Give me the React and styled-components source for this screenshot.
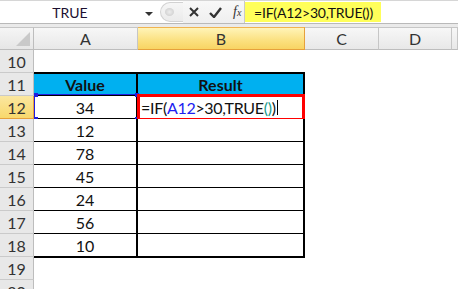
import styled, { createGlobalStyle } from 'styled-components';

const GlobalStyle = createGlobalStyle`
  html, body {
    margin: 0;
    padding: 0;
    background: #fff;
  }
  body {
    width: 458px;
    height: 289px;
    overflow: hidden;
    font-family: 'Lato', 'Open Sans', sans-serif;
  }
`;

const COLS = ['A', 'B', 'C', 'D'];
const ROWS = [10, 11, 12, 13, 14, 15, 16, 17, 18, 19, 20];
const values = { 13: '12', 14: '78', 15: '45', 16: '24', 17: '56', 18: '10' };

const App = () => {
  return (
    <Page>
      <GlobalStyle />
      <FormulaBar>
        <NameBox>
          <span>TRUE</span>
          <Caret />
        </NameBox>
        <Grip>
          <Knob />
        </Grip>
        <BarIcons>
          <svg width='10' height='10' viewBox='0 0 10 10'>
            <path d='M1 1 L9 9 M9 1 L1 9' stroke='#333' strokeWidth='2' />
          </svg>
          <svg width='13' height='11' viewBox='0 0 13 11'>
            <path d='M1 6 L5 10 L12 1' stroke='#333' strokeWidth='2.4' fill='none' />
          </svg>
          <Fx>
            f<sub>x</sub>
          </Fx>
        </BarIcons>
        <FormulaInput>
          <Highlight>=IF(A12&gt;30,TRUE())</Highlight>
        </FormulaInput>
      </FormulaBar>
      <Band />
      <Sheet>
        <Corner>
          <svg width='16' height='16' viewBox='0 0 16 16'>
            <path d='M15 1 L15 15 L1 15 Z' fill='#c9c9c9' />
          </svg>
        </Corner>
        {COLS.map(c => (
          <ColHead key={c} active={c === 'B'}>
            {c}
          </ColHead>
        ))}
        <ColHead />
        {ROWS.map(r => {
          const inTable = r >= 11 && r <= 18;
          return [
            <RowHead key={`h${r}`} active={r === 12}>
              {r}
            </RowHead>,
            inTable ? (
              <Cell key={`a${r}`} header={r === 11} top={r === 11} side>
                {r === 11 ? 'Value' : r === 12 ? '34' : values[r]}
                {r === 12 && (
                  <RangeBox>
                    <Handle pos='tl' />
                    <Handle pos='tr' />
                    <Handle pos='bl' />
                    <Handle pos='br' />
                  </RangeBox>
                )}
              </Cell>
            ) : (
              <Blank key={`a${r}`} />
            ),
            inTable ? (
              <Cell key={`b${r}`} header={r === 11} top={r === 11} side>
                {r === 11 && 'Result'}
                {r === 12 && (
                  <EditBox>
                    =IF(<Ref>A12</Ref>&gt;30,TRUE<Paren>()</Paren>)
                    <Cursor />
                  </EditBox>
                )}
              </Cell>
            ) : (
              <Blank key={`b${r}`} />
            ),
            <Blank key={`c${r}`} />,
            <Blank key={`d${r}`} />,
            <Blank key={`e${r}`} />,
          ];
        })}
      </Sheet>
    </Page>
  );
};

const Page = styled.div`
  width: 458px;
  height: 289px;
  overflow: hidden;
  background: #fff;
`;

const FormulaBar = styled.div`
  display: flex;
  align-items: stretch;
  height: 24px;
  box-sizing: border-box;
  border-top: 1px solid #d6d6d6;
  border-bottom: 1px solid #b9b9b9;
  background: #fff;
`;

const NameBox = styled.div`
  position: relative;
  display: flex;
  align-items: center;
  justify-content: center;
  width: 160px;
  padding-right: 20px;
  box-sizing: border-box;
  font-size: 14px;
  color: #1c1030;
`;

const Caret = styled.div`
  position: absolute;
  right: 7px;
  top: 11px;
  width: 0;
  height: 0;
  border-left: 4px solid transparent;
  border-right: 4px solid transparent;
  border-top: 4px solid #333;
`;

const Grip = styled.div`
  display: flex;
  align-items: center;
  width: 22px;
  margin: 1px 0;
  border-radius: 11px 0 0 11px;
  border: 1px solid #d2d2d2;
  border-right: none;
  background: linear-gradient(#f6f6f6, #ebebeb);
`;

const Knob = styled.div`
  width: 9px;
  height: 8px;
  margin-left: 4px;
  border-radius: 50%;
  background: radial-gradient(#ededed, #c8c8c8);
`;

const BarIcons = styled.div`
  display: flex;
  align-items: center;
  gap: 10px;
  padding-left: 6px;
  width: 62px;
  box-sizing: border-box;
  background: linear-gradient(#f8f8f8, #efefef);
  border-right: 1px solid #c9c9c9;
`;

const Fx = styled.span`
  font-family: 'Liberation Serif', serif;
  font-style: italic;
  font-size: 14px;
  color: #333;
  margin-left: 1px;
  sub {
    font-size: 10px;
    vertical-align: 0;
  }
`;

const FormulaInput = styled.div`
  display: flex;
  align-items: center;
  flex: 1;
  padding: 1px 0;
`;

const Highlight = styled.div`
  display: flex;
  align-items: center;
  height: 100%;
  padding: 0 8px 0 9px;
  background: #ffff5a;
  font-size: 14px;
  letter-spacing: -0.2px;
  color: #111;
`;

const Band = styled.div`
  height: 3px;
  background: #eaeaea;
`;

const Sheet = styled.div`
  display: grid;
  grid-template-columns: 34px 104px 167px 74px 73px 1fr;
  grid-auto-rows: 23px;
  font-size: 16px;
`;

const Corner = styled.div`
  display: flex;
  align-items: flex-end;
  justify-content: flex-end;
  padding: 0 2px 2px 0;
  box-sizing: border-box;
  background: linear-gradient(#f5f5f5, #e6e6e6);
  border-top: 1px solid #c6c6c6;
  border-right: 1px solid #bdbdbd;
  border-bottom: 1px solid #bdbdbd;
`;

const ColHead = styled.div`
  display: flex;
  align-items: center;
  justify-content: center;
  box-sizing: border-box;
  border-top: 1px solid ${({ active }) => (active ? '#f0b350' : '#c6c6c6')};
  border-right: 1px solid ${({ active }) => (active ? '#e6a13c' : '#c6c6c6')};
  border-bottom: 1px solid ${({ active }) => (active ? '#e6a13c' : '#bdbdbd')};
  background: ${({ active }) =>
    active ? 'linear-gradient(#fff4b8, #fbe07f 60%, #f8d463)' : 'linear-gradient(#f7f7f7, #e8e8e8)'};
  color: #333;
`;

const RowHead = styled.div`
  display: flex;
  align-items: center;
  justify-content: center;
  box-sizing: border-box;
  border-right: 1px solid ${({ active }) => (active ? '#e6a13c' : '#bdbdbd')};
  border-bottom: 1px solid ${({ active }) => (active ? '#e6a13c' : '#cacaca')};
  background: ${({ active }) => (active ? 'linear-gradient(#fbe7a0, #f8d86c)' : '#e8e8e8')};
  color: #333;
`;

const Blank = styled.div`
  background: #fff;
`;

const Cell = styled.div`
  position: relative;
  display: flex;
  align-items: center;
  justify-content: center;
  box-sizing: border-box;
  margin-top: ${({ top }) => (top ? '-1px' : '0')};
  border-top: ${({ top }) => (top ? '2px solid #000' : 'none')};
  border-right: ${({ side }) => (side ? '2px solid #000' : 'none')};
  border-bottom: 2px solid #000;
  margin-bottom: -1px;
  z-index: 1;
  background: ${({ header }) => (header ? '#00b0f0' : '#fff')};
  font-weight: ${({ header }) => (header ? 700 : 400)};
  color: #111;
`;

const RangeBox = styled.div`
  position: absolute;
  left: 0;
  top: -2px;
  right: -2px;
  bottom: -2px;
  border: 1px solid #1f1fe0;
`;

const Handle = styled.div`
  position: absolute;
  width: 4px;
  height: 4px;
  background: #1f1fe0;
  ${({ pos }) => (pos[0] === 't' ? 'top: -2px;' : 'bottom: -2px;')}
  ${({ pos }) => (pos[1] === 'l' ? 'left: -1px;' : 'right: -2px;')}
`;

const EditBox = styled.div`
  position: absolute;
  left: -1px;
  top: -2px;
  right: -2px;
  bottom: -3px;
  display: flex;
  align-items: center;
  padding-left: 1px;
  border: 3px solid #ff0000;
  background: #fff;
  font-size: 16px;
  letter-spacing: -0.3px;
  color: #111;
`;

const Ref = styled.span`
  color: #2020f0;
`;

const Paren = styled.span`
  color: #1a9a8a;
`;

const Cursor = styled.span`
  display: inline-block;
  width: 1px;
  height: 15px;
  margin-left: 1px;
  background: #000;
`;

export default App;
